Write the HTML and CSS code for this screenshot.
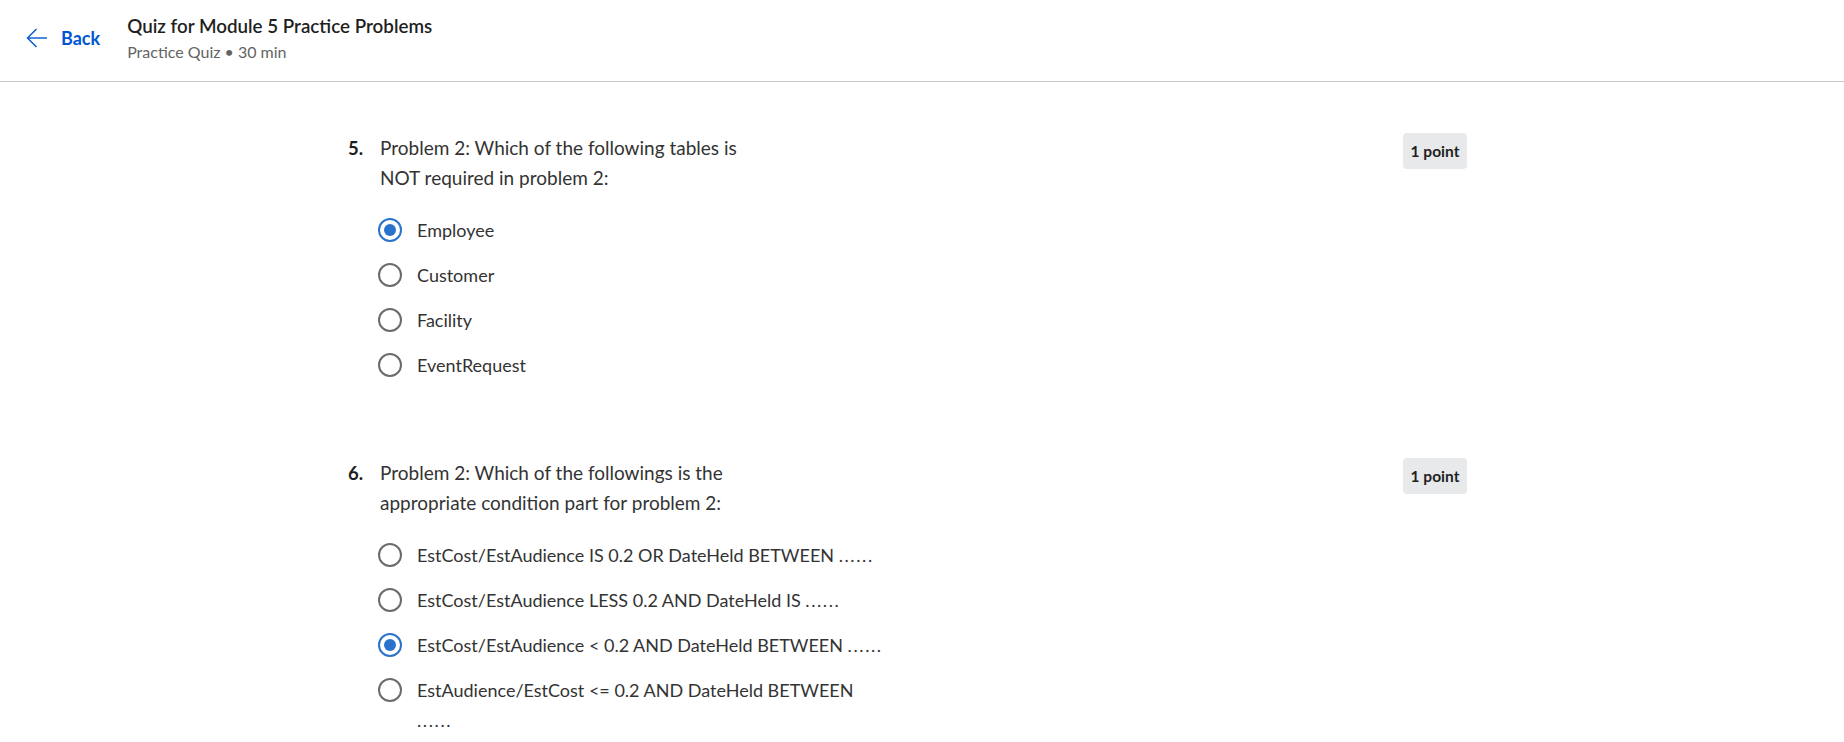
FILE: index.html
```html
<!DOCTYPE html>
<html lang="en">
<head>
<meta charset="utf-8">
<title>Quiz for Module 5 Practice Problems</title>
<link rel="stylesheet" href="styles.css">
</head>
<body>
<header class="topbar">
  <a class="back" href="#">
    <svg class="back-icon" width="22" height="20" viewBox="0 0 22 20" fill="none" stroke="currentColor" stroke-width="1.4">
      <path d="M21 10H1.5"/>
      <path d="M10.5 1L1.5 10L10.5 19"/>
    </svg>
    <span>Back</span>
  </a>
  <div class="titles">
    <div class="title">Quiz for Module 5 Practice Problems</div>
    <div class="subtitle">Practice Quiz • 30 min</div>
  </div>
</header>
<main class="content">
  <section class="question">
    <div class="qnum">5.</div>
    <div class="qbody">
      <div class="qtext">Problem 2: Which of the following tables is<br>NOT required in problem 2:</div>
      <div class="options">
        <label class="option"><span class="radio checked"></span><span class="label">Employee</span></label>
        <label class="option"><span class="radio"></span><span class="label">Customer</span></label>
        <label class="option"><span class="radio"></span><span class="label">Facility</span></label>
        <label class="option"><span class="radio"></span><span class="label">EventRequest</span></label>
      </div>
    </div>
    <div class="points">1 point</div>
  </section>
  <section class="question">
    <div class="qnum">6.</div>
    <div class="qbody">
      <div class="qtext">Problem 2: Which of the followings is the<br>appropriate condition part for problem 2:</div>
      <div class="options">
        <label class="option"><span class="radio"></span><span class="label">EstCost/EstAudience IS 0.2 OR DateHeld BETWEEN <span class="dots">......</span></span></label>
        <label class="option"><span class="radio"></span><span class="label">EstCost/EstAudience LESS 0.2 AND DateHeld IS <span class="dots">......</span></span></label>
        <label class="option"><span class="radio checked"></span><span class="label">EstCost/EstAudience &lt; 0.2 AND DateHeld BETWEEN <span class="dots">......</span></span></label>
        <label class="option"><span class="radio"></span><span class="label">EstAudience/EstCost &lt;= 0.2 AND DateHeld BETWEEN<br><span class="dots">......</span></span></label>
      </div>
    </div>
    <div class="points">1 point</div>
  </section>
</main>
</body>
</html>
```
FILE: styles.css
```css
* { box-sizing: border-box; }
html, body { margin: 0; padding: 0; background: #ffffff; }
body {
  font-family: Lato, "Open Sans", sans-serif;
  color: #333333;
  overflow: hidden;
}
.topbar {
  height: 82px;
  border-bottom: 1px solid #c9c9c9;
  display: flex;
  align-items: flex-start;
  padding-left: 26px;
}
.back {
  display: flex;
  align-items: center;
  gap: 13px;
  margin-top: 28px;
  color: #0056d2;
  text-decoration: none;
  font-weight: 700;
  font-size: 18px;
  line-height: 20px;
}
.back-icon { display: block; }
.titles {
  margin-left: 27px;
  margin-top: 14px;
}
.title {
  font-size: 18.8px;
  font-weight: 600;
  line-height: 24px;
  color: #1f1f1f;
}
.subtitle {
  font-size: 16px;
  line-height: 24px;
  margin-top: 2px;
  color: #636363;
}
.content {
  padding: 51px 0 0 348px;
  width: 1467px;
}
.question {
  display: flex;
  align-items: flex-start;
  margin-bottom: 70.5px;
}
.qnum {
  width: 32px;
  flex: none;
  font-weight: 700;
  font-size: 18.5px;
  line-height: 30px;
  color: #1f1f1f;
}
.qbody { flex: 1; }
.qtext {
  font-size: 19px;
  line-height: 30px;
  color: #333333;
}
.options {
  margin-top: 14.5px;
  display: flex;
  flex-direction: column;
}
.option {
  display: flex;
  align-items: flex-start;
  gap: 15px;
  padding: 7.5px 0 7.5px 0;
  margin-left: -2px;
}
.radio {
  flex: none;
  width: 24px;
  height: 24px;
  margin-top: 3px;
  border-radius: 50%;
  border: 2.5px solid #6b6b6b;
  position: relative;
}
.radio.checked { border-color: #2a73cc; }
.radio.checked::after {
  content: "";
  position: absolute;
  left: 3.5px;
  top: 3.5px;
  width: 12px;
  height: 12px;
  border-radius: 50%;
  background: #2a73cc;
}
.label {
  font-size: 18px;
  line-height: 30px;
  color: #333333;
}
.dots { letter-spacing: 1.6px; }
.points {
  flex: none;
  width: 64px;
  height: 36px;
  border-radius: 4px;
  background: #e8e9ea;
  color: #1f1f1f;
  font-weight: 700;
  font-size: 15.5px;
  display: flex;
  align-items: center;
  justify-content: center;
}
```
